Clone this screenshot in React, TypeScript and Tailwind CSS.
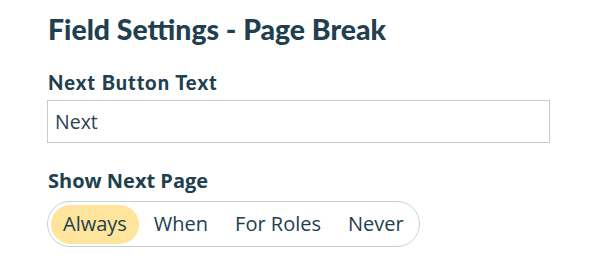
import React, { useState } from "react";

const options = ["Always", "When", "For Roles", "Never"];

const App: React.FC = () => {
  const [selected, setSelected] = useState("Always");
  const [value, setValue] = useState("Next");

  return (
    <div className="w-[598px] h-[268px] bg-white pl-[47px] pr-[48px] pt-[12px] text-[#213f4f]">
      <h2 className="font-['Lato',sans-serif] font-black text-[28.4px] leading-[34px] pl-[1px]">
        Field Settings - Page Break
      </h2>
      <label className="block mt-[24px] font-['Lato',sans-serif] font-black text-[20px] leading-[24px] tracking-[1px] pl-[1px]">
        Next Button Text
      </label>
      <input
        value={value}
        onChange={(e) => setValue(e.target.value)}
        className="mt-[6px] w-[503px] h-[43px] border border-[#bfcdcf] px-[7px] font-['Open_Sans',sans-serif] text-[19.5px] text-[#2c3e4c] outline-none"
      />
      <div className="mt-[26px] font-['Open_Sans',sans-serif] font-bold text-[20px] leading-[24px] pl-[1px]">
        Show Next Page
      </div>
      <div className="mt-[8px] inline-flex items-center h-[46px] rounded-full border border-[#c5d1d3] px-[3px] gap-[3px]">
        {options.map((opt) => (
          <button
            key={opt}
            onClick={() => setSelected(opt)}
            className={
              "h-[39px] rounded-full px-[12px] font-['Open_Sans',sans-serif] text-[20px] text-[#213f4f] " +
              (selected === opt ? "bg-[#ffe49c]" : "bg-transparent")
            }
          >
            {opt}
          </button>
        ))}
      </div>
    </div>
  );
};

export default App;
